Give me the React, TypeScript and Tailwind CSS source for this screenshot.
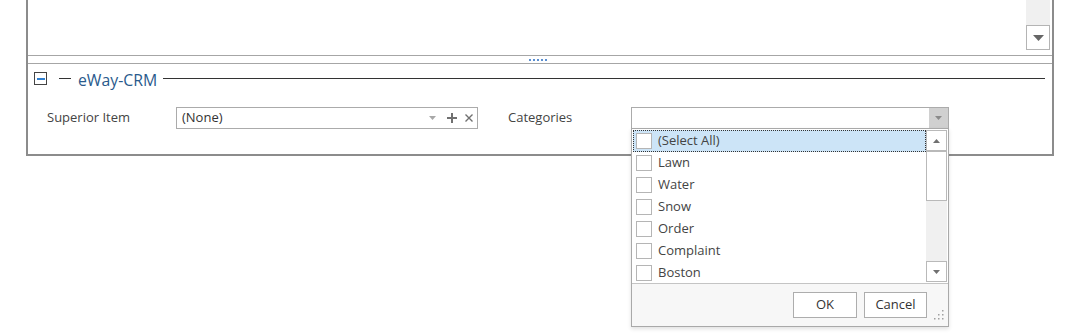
import React from "react";

const font = { fontFamily: '"Segoe UI", "Open Sans", "Noto Sans", sans-serif' };

const Tri: React.FC<{ up?: boolean; color?: string; w?: number }> = ({ up, color = "#606060", w = 9 }) => (
  <svg width={w} height={Math.ceil(w / 2)} viewBox={`0 0 ${w} ${Math.ceil(w / 2)}`}>
    {up ? (
      <polygon points={`0,${Math.ceil(w / 2)} ${w},${Math.ceil(w / 2)} ${w / 2},0`} fill={color} />
    ) : (
      <polygon points={`0,0 ${w},0 ${w / 2},${Math.ceil(w / 2)}`} fill={color} />
    )}
  </svg>
);

const items = ["(Select All)", "Lawn", "Water", "Snow", "Order", "Complaint", "Boston"];

const CategoryPopup: React.FC = () => (
  <div className="absolute left-[631px] top-[128px] w-[318px] h-[199px] border border-[#a9a9a9] bg-white shadow-[0_2px_4px_rgba(0,0,0,0.12)] flex flex-col">
    <div className="h-[155px] flex border-b border-[#c4c4c4]">
      <div className="flex-1 pt-[1px] pl-[1px]">
        {items.map((it, i) => (
          <div
            key={it}
            className={
              "h-[22px] flex items-center pl-[2px] " +
              (i === 0 ? "bg-[#cce4f7] border border-dotted border-[#333]" : "border border-transparent")
            }
          >
            <div className="w-[16px] h-[16px] border border-[#b5b5b5] bg-white" />
            <span className="ml-[6px] text-[13px] text-[#444]">{it}</span>
          </div>
        ))}
      </div>
      <div className="w-[21px] mr-[1px] mt-[1px] mb-[1px] flex flex-col bg-[#f0f0f0]">
        <div className="h-[21px] border border-[#b9b9b9] bg-white flex items-center justify-center">
          <Tri up w={7} color="#707070" />
        </div>
        <div className="h-[50px] border border-[#b9b9b9] bg-white" />
        <div className="flex-1" />
        <div className="h-[21px] border border-[#b9b9b9] bg-white flex items-center justify-center">
          <Tri w={7} color="#707070" />
        </div>
      </div>
    </div>
    <div className="flex-1 bg-[#f7f7f7] flex items-start justify-end pt-[8px] pr-[21px] gap-[7px] relative">
      <button className="w-[64px] h-[26px] border border-[#adadad] bg-white text-[13px] text-[#333]">OK</button>
      <button className="w-[63px] h-[26px] border border-[#adadad] bg-white text-[13px] text-[#333]">Cancel</button>
      <svg className="absolute right-[4px] bottom-[5px]" width="12" height="12" viewBox="0 0 12 12">
        {[
          [10, 1],
          [10, 5],
          [6, 5],
          [10, 9],
          [6, 9],
          [2, 9],
        ].map(([x, y]) => (
          <rect key={`${x}-${y}`} x={x} y={y} width="1.5" height="1.5" fill="#a0a0a0" />
        ))}
      </svg>
    </div>
  </div>
);

export default function App() {
  return (
    <div className="w-[1083px] h-[335px] bg-white relative overflow-hidden" style={font}>
      <div className="ml-[26px] w-[1028px] border-x-2 border-b-2 border-[#8c8c8c]">
        {/* top pane with scrollbar */}
        <div className="h-[56px] flex justify-end pr-[2px] border-b border-[#a6a6a6]">
          <div className="w-[24px] flex flex-col">
            <div className="h-[25px] bg-[#f0f0f0]" />
            <div className="h-[25px] border border-[#b4b4b4] bg-white flex items-center justify-center">
              <Tri w={11} color="#666" />
            </div>
          </div>
        </div>
        {/* splitter */}
        <div className="h-[8px] border-b border-[#a6a6a6] flex justify-center items-center">
          <div className="flex gap-[2px] ml-[-4px]">
            {[0, 1, 2, 3, 4].map((i) => (
              <div key={i} className="w-[2px] h-[2px] bg-[#5b8fd1]" />
            ))}
          </div>
        </div>
        {/* group */}
        <div className="h-[90px] pt-[8px]">
          <div className="flex items-center h-[13px] pl-[6px]">
            <div className="w-[13px] h-[13px] border border-[#444] flex items-center justify-center">
              <div className="w-[8px] h-[2px] bg-[#2f7fd0]" />
            </div>
            <div className="ml-[12px] w-[12px] h-px bg-[#333]" />
            <span className="ml-[7px] text-[15.8px] text-[#2a5a8c] leading-none relative top-[2px]">eWay-CRM</span>
            <div className="ml-[6px] mr-[7px] flex-1 h-px bg-[#333]" />
          </div>
          <div className="flex items-center mt-[22px]">
            <span className="ml-[19px] w-[129px] text-[13px] text-[#444]">Superior Item</span>
            <div className="w-[302px] h-[22px] border border-[#ababab] flex items-center">
              <span className="ml-[5px] text-[13px] text-[#333] flex-1">(None)</span>
              <span className="mr-[11px]">
                <Tri w={7} color="#a8a8a8" />
              </span>
              <svg width="10" height="10" viewBox="0 0 10 10" className="mr-[8px]">
                <rect x="4" y="0" width="2" height="10" fill="#707070" />
                <rect x="0" y="4" width="10" height="2" fill="#707070" />
              </svg>
              <svg width="8" height="8" viewBox="0 0 8 8" className="mr-[4px]">
                <path d="M0.5 0.5 L7.5 7.5 M7.5 0.5 L0.5 7.5" stroke="#707070" strokeWidth="1.4" />
              </svg>
            </div>
            <span className="ml-[30px] w-[123px] text-[13px] text-[#444]">Categories</span>
            <div className="w-[318px] h-[22px] border border-[#ababab] flex justify-end">
              <div className="w-[19px] bg-[#d0d0d0] flex items-center justify-center">
                <Tri w={7} color="#8a8a8a" />
              </div>
            </div>
          </div>
        </div>
      </div>
      <CategoryPopup />
    </div>
  );
}
